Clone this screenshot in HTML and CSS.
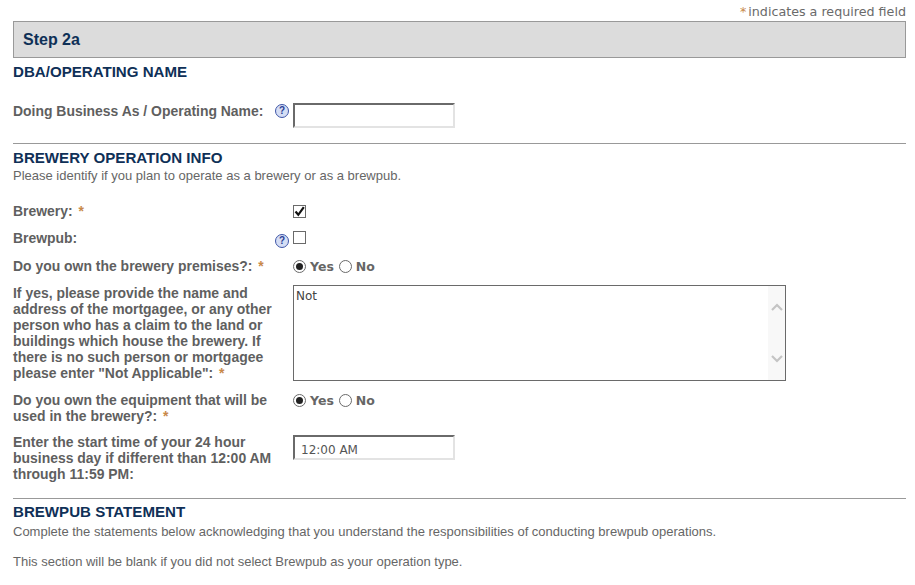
FILE: index.html
```html
<!DOCTYPE html>
<html lang="en">

<head>
    <meta charset="UTF-8">
    <meta name="viewport" content="width=device-width, initial-scale=1.0">
    <title>Step 2a</title>
    <link rel="stylesheet" href="styles.css">
</head>

<body>
    <div class="required-note"><span class="req">*</span>indicates a required field</div>
    <div class="step-bar">Step 2a</div>

    <h2 class="section-first">DBA/OPERATING NAME</h2>
    <div class="row row-dba">
        <label>Doing Business As / Operating Name:</label>
        <span class="help">?</span>
        <div class="text-input"></div>
    </div>
    <hr class="rule-first">

    <h2>BREWERY OPERATION INFO</h2>
    <p class="desc">Please identify if you plan to operate as a brewery or as a brewpub.</p>

    <div class="row row-brewery">
        <label>Brewery: <span class="req">*</span></label>
        <span></span>
        <span class="check">
            <svg width="11" height="11" viewBox="0 0 11 11"><path d="M1.5 5.5 L4.3 8.8 L9.8 1.2" fill="none" stroke="#111" stroke-width="2.2"/></svg>
        </span>
    </div>
    <div class="row row-brewpub">
        <label>Brewpub:</label>
        <span class="help">?</span>
        <span class="check"></span>
    </div>
    <div class="row row-own">
        <label>Do you own the brewery premises?: <span class="req">*</span></label>
        <span></span>
        <div class="radios">
            <span class="radio on"></span><span class="radio-text">Yes</span>
            <span class="radio"></span><span class="radio-text">No</span>
        </div>
    </div>
    <div class="row row-mortgage">
        <label>If yes, please provide the name and address of the mortgagee, or any other person who has a claim to the land or buildings which house the brewery. If there is no such person or mortgagee please enter "Not Applicable": <span class="req">*</span></label>
        <span></span>
        <div class="textarea">
            <span class="textarea-text">Not</span>
            <div class="scrollbar">
                <svg width="12" height="8" viewBox="0 0 12 8"><path d="M1 7 L6 2 L11 7" fill="none" stroke="#c4c4c4" stroke-width="2.2"/></svg>
                <svg width="12" height="8" viewBox="0 0 12 8"><path d="M1 1 L6 6 L11 1" fill="none" stroke="#c4c4c4" stroke-width="2.2"/></svg>
            </div>
        </div>
    </div>
    <div class="row row-equipment">
        <label>Do you own the equipment that will be used in the brewery?: <span class="req">*</span></label>
        <span></span>
        <div class="radios">
            <span class="radio on"></span><span class="radio-text">Yes</span>
            <span class="radio"></span><span class="radio-text">No</span>
        </div>
    </div>
    <div class="row row-time">
        <label>Enter the start time of your 24 hour business day if different than 12:00 AM through 11:59 PM:</label>
        <span></span>
        <div class="text-input">12:00 AM</div>
    </div>
    <hr class="rule-second">

    <h2>BREWPUB STATEMENT</h2>
    <p class="desc desc-statement">Complete the statements below acknowledging that you understand the responsibilities of conducting brewpub operations.</p>
    <p class="desc desc-last">This section will be blank if you did not select Brewpub as your operation type.</p>
</body>

</html>
```

FILE: styles.css
```css
body {
    margin: 0;
    padding: 0 9px 0 13px;
    font-family: "Liberation Sans", Arial, sans-serif;
    font-size: 13px;
    color: #666;
    background-color: #fff;
    overflow: hidden;
}

.required-note {
    font-family: "DejaVu Sans", Verdana, sans-serif;
    font-size: 12.7px;
    line-height: 14px;
    padding-top: 5px;
    height: 16px;
    text-align: right;
    color: #6a6a6a;
}

.required-note .req {
    margin-right: 2px;
}

.req {
    color: #c8894a;
}

.step-bar {
    box-sizing: border-box;
    height: 37px;
    line-height: 35px;
    padding-left: 9px;
    background-color: #dcdcdc;
    border: 1px solid #999;
    color: #0f3057;
    font-size: 16px;
    font-weight: bold;
}

h2 {
    margin: 0;
    font-size: 15.1px;
    line-height: 16px;
    font-weight: bold;
    color: #0f3057;
}

.section-first {
    margin-top: 6px;
}

.desc {
    margin: 3px 0 0;
    line-height: 14px;
    color: #666;
}

.desc-statement {
    margin-top: 5px;
}

.desc-last {
    margin-top: 16px;
}

hr {
    height: 1px;
    margin: 0;
    border: none;
    background-color: #999;
}

.rule-first {
    margin: 15px 0 6px;
}

.rule-second {
    margin: 16px 0 5px;
}

.row {
    display: grid;
    grid-template-columns: 262px 18px 1fr;
    font-size: 13.95px;
}

.row label {
    font-weight: bold;
    line-height: 16px;
    color: #5f5f5f;
}

.row label .req {
    margin-left: 2px;
}

.row-dba {
    margin-top: 23px;
    align-items: start;
}

.row-brewery {
    margin-top: 20px;
}

.row-brewpub {
    margin-top: 11px;
}

.row-own {
    margin-top: 10px;
}

.row-mortgage {
    margin-top: 11px;
}

.row-equipment {
    margin-top: 11px;
}

.row-time {
    margin-top: 10px;
}

.row-time .text-input {
    margin-top: 1px;
}

.help {
    box-sizing: border-box;
    width: 14px;
    height: 14px;
    margin-top: 1px;
    border: 1px solid #3f56a8;
    border-radius: 50%;
    background-color: #d5def5;
    color: #2b3f94;
    font-size: 10px;
    font-weight: bold;
    line-height: 12px;
    text-align: center;
}

.row-brewpub .help {
    margin-top: 4px;
}

.text-input {
    box-sizing: border-box;
    width: 162px;
    height: 25px;
    padding: 6px 0 0 6px;
    background-color: #fff;
    border: 2px solid #e3e3e3;
    border-top-color: #6a6a6a;
    border-left-color: #6a6a6a;
    font-family: "DejaVu Sans", Verdana, sans-serif;
    font-size: 12px;
    line-height: 15px;
    color: #555;
}

.check {
    box-sizing: border-box;
    display: flex;
    align-items: center;
    justify-content: center;
    width: 13px;
    height: 13px;
    margin-top: 1px;
    border: 1px solid #6a6a6a;
    background-color: #fff;
}

.row-brewery .check {
    margin-top: 2px;
}

.radios {
    display: flex;
    align-items: center;
    height: 16px;
}

.radio {
    box-sizing: border-box;
    display: flex;
    align-items: center;
    justify-content: center;
    width: 13px;
    height: 13px;
    border: 1px solid #6a6a6a;
    border-radius: 50%;
    background-color: #fff;
}

.radio.on::after {
    content: "";
    width: 7px;
    height: 7px;
    border-radius: 50%;
    background-color: #222;
}

.radio-text {
    margin: 0 5px 0 4px;
    font-family: "DejaVu Sans", Verdana, sans-serif;
    font-size: 12.5px;
    font-weight: bold;
    color: #666;
}

.textarea {
    box-sizing: border-box;
    display: flex;
    justify-content: space-between;
    width: 493px;
    height: 96px;
    border: 1px solid #6a6a6a;
    background-color: #fff;
}

.textarea-text {
    padding: 3px 0 0 2px;
    font-family: "DejaVu Sans", Verdana, sans-serif;
    font-size: 12px;
    line-height: 15px;
    color: #444;
}

.scrollbar {
    display: flex;
    flex-direction: column;
    align-items: center;
    justify-content: space-between;
    width: 17px;
    padding: 17px 0;
    background-color: #f8f8f8;
}
```
